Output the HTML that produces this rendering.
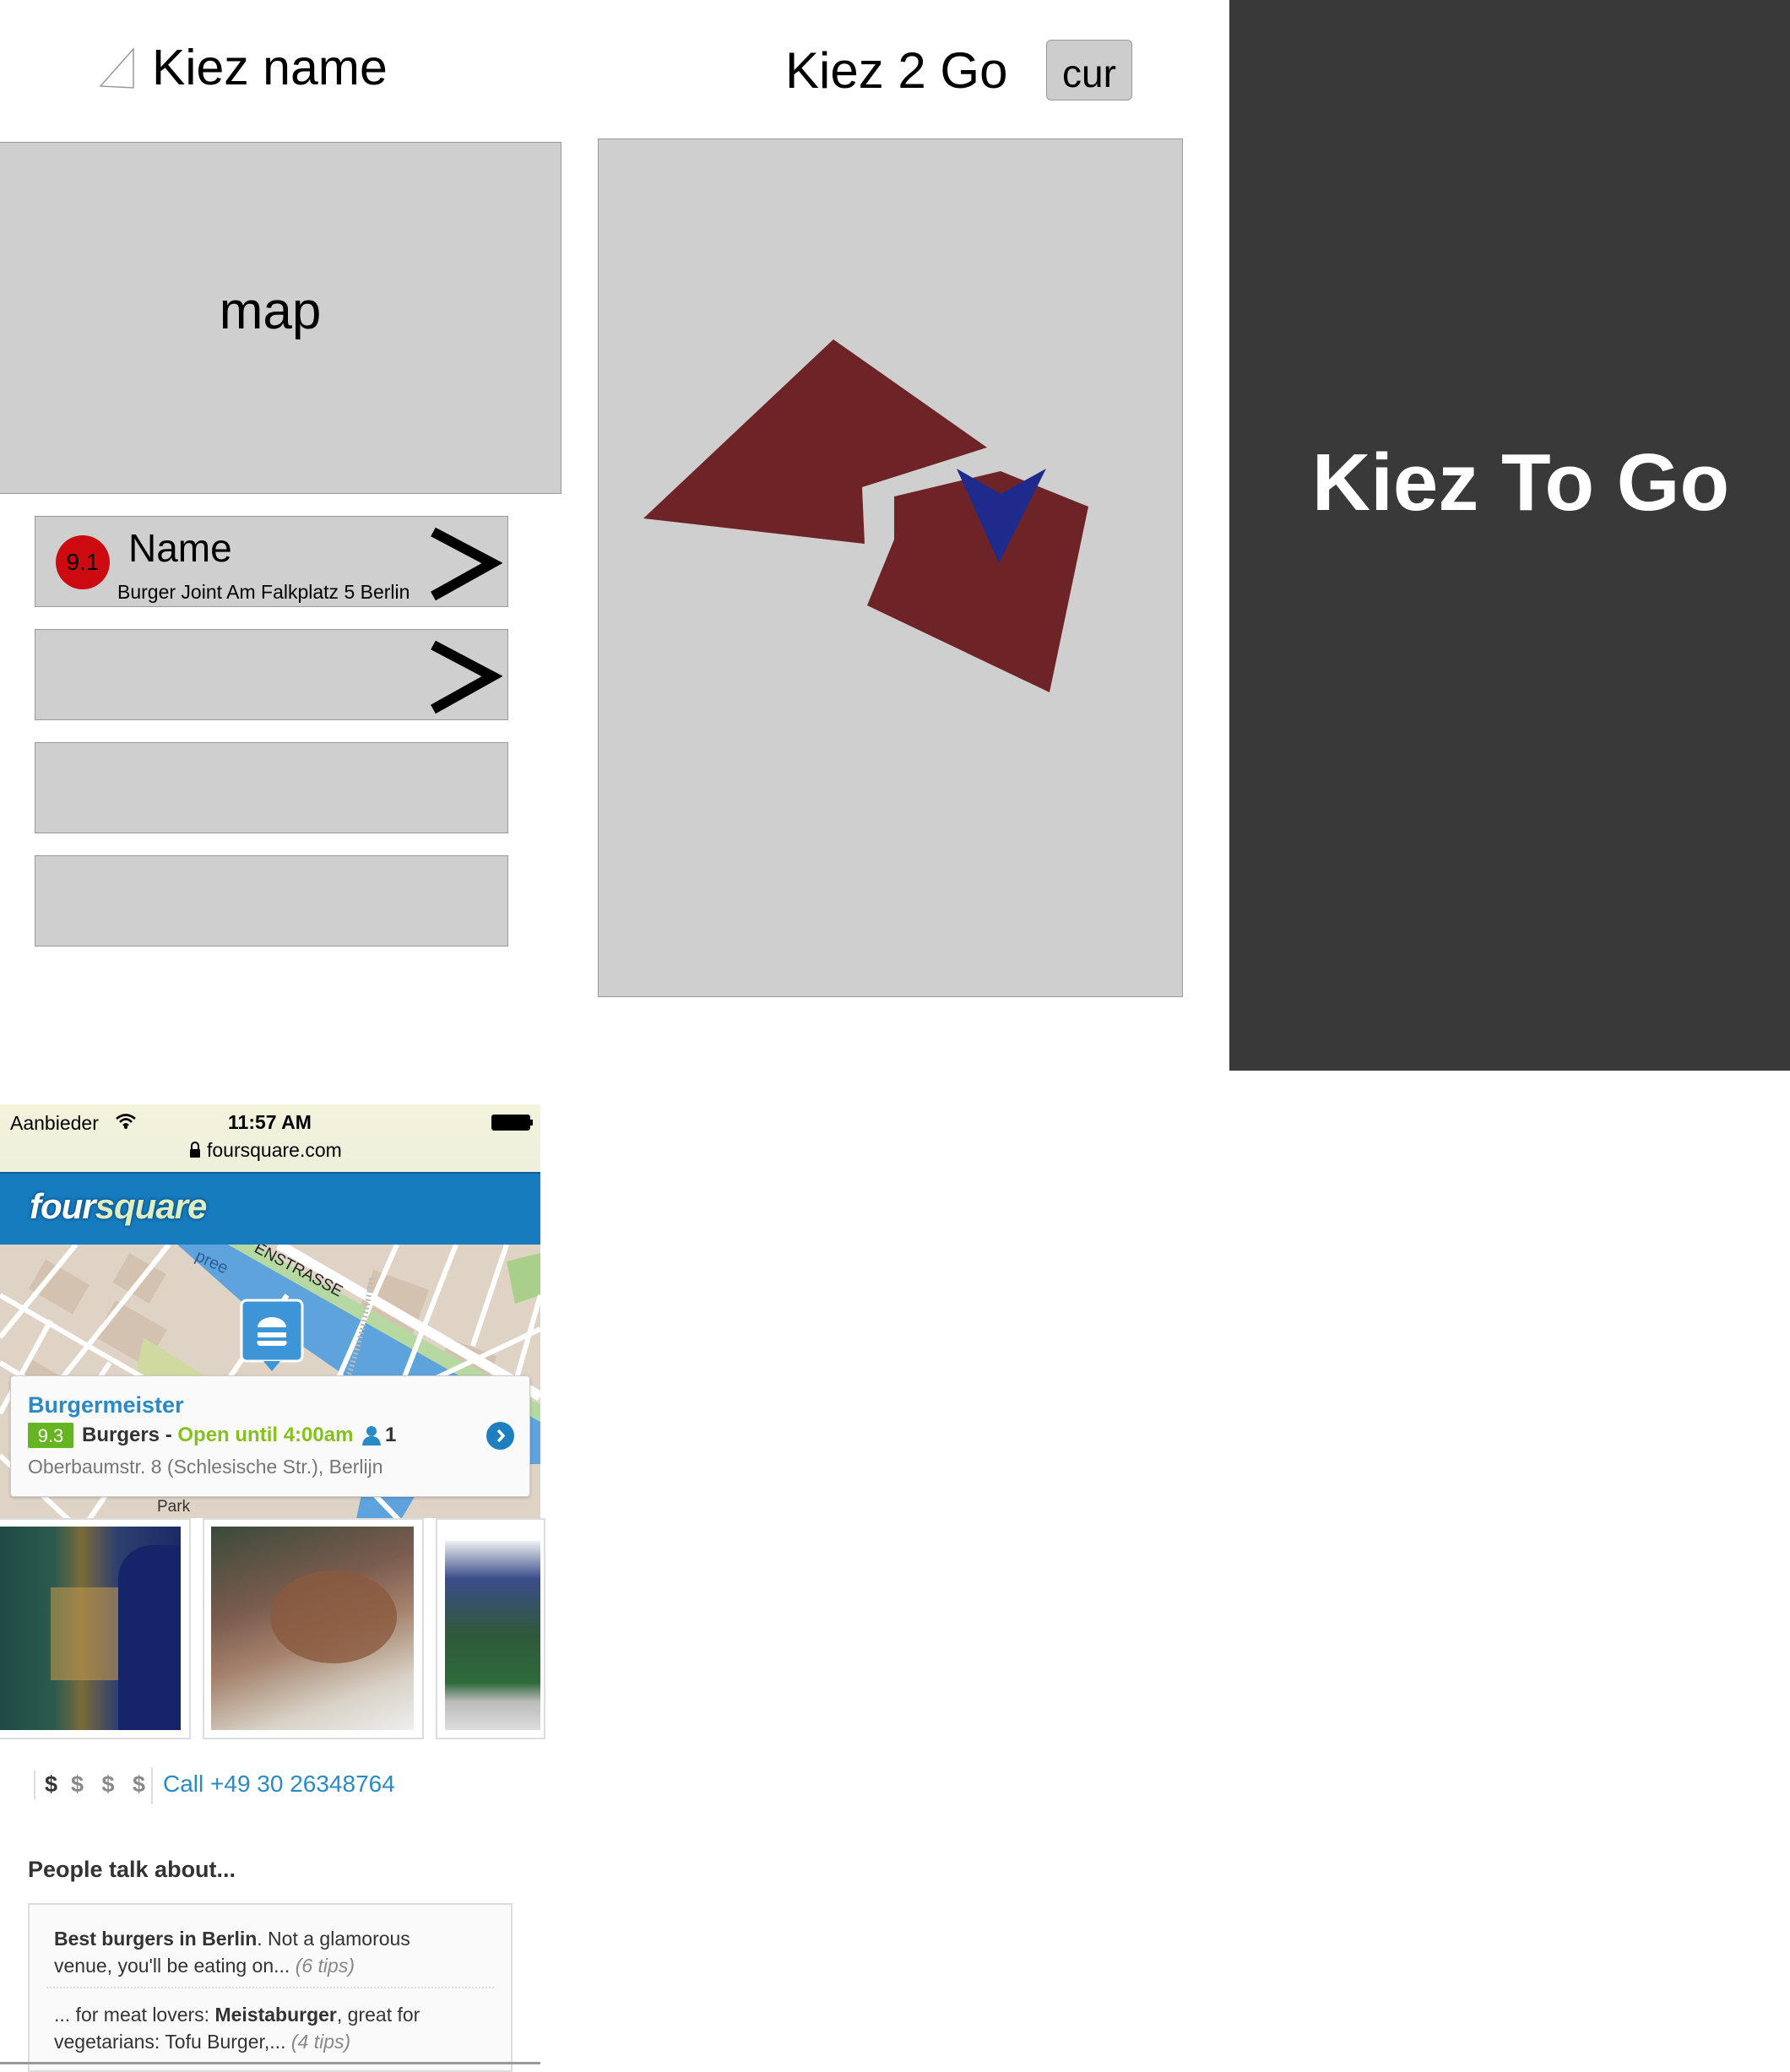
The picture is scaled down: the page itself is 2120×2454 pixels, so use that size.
<!DOCTYPE html>
<html><head><meta charset="utf-8"><style>
*{margin:0;padding:0;box-sizing:border-box}
body{width:2120px;height:2445px;background:#fff;position:relative;overflow:hidden;font-family:"Liberation Sans",sans-serif;color:#000}
.a{position:absolute}
.box{position:absolute;background:#cfcfcf;border:1.5px solid #999}
.t{position:absolute;white-space:nowrap;line-height:1}
</style></head><body>
<!-- dark panel -->
<div class="a" style="left:1456px;top:0;width:664px;height:1268px;background:#393939"></div>
<div class="t" style="left:1456px;width:690px;top:524px;text-align:center;color:#fff;font-weight:bold;font-size:96px">Kiez To Go</div>

<!-- left wireframe -->
<svg class="a" style="left:116px;top:56px" width="46" height="50"><polygon points="42,2 42,48 3,46" fill="none" stroke="#999" stroke-width="1.5"/></svg>
<div class="t" style="left:180px;top:51px;font-size:59px">Kiez name</div>
<div class="box" style="left:-2px;top:168px;width:667px;height:417px"></div>
<div class="t" style="left:0;width:640px;top:338px;text-align:center;font-size:62px">map</div>

<div class="box" style="left:41px;top:611px;width:561px;height:108px"></div>
<div class="a" style="left:66px;top:634px;width:64px;height:64px;border-radius:50%;background:#cc0a10"></div>
<div class="t" style="left:66px;width:64px;top:652px;text-align:center;font-size:28px">9.1</div>
<div class="t" style="left:152px;top:626px;font-size:46px">Name</div>
<div class="t" style="left:139px;top:690px;font-size:23px">Burger Joint Am Falkplatz 5 Berlin</div>
<svg class="a" style="left:505px;top:622px" width="90" height="90"><polyline points="8,8 78,45 8,84" fill="none" stroke="#000" stroke-width="12"/></svg>

<div class="box" style="left:41px;top:745px;width:561px;height:108px"></div>
<svg class="a" style="left:505px;top:756px" width="90" height="90"><polyline points="8,8 78,45 8,84" fill="none" stroke="#000" stroke-width="12"/></svg>
<div class="box" style="left:41px;top:879px;width:561px;height:108px"></div>
<div class="box" style="left:41px;top:1013px;width:561px;height:108px"></div>

<!-- right wireframe -->
<div class="t" style="left:930px;top:54px;font-size:60px">Kiez 2 Go</div>
<div class="a" style="left:1239px;top:47px;width:102px;height:72px;background:#cdcdcd;border:1.5px solid #999;border-radius:6px"></div>
<div class="t" style="left:1239px;width:102px;top:64px;text-align:center;font-size:46px">cur</div>
<div class="box" style="left:708px;top:164px;width:693px;height:1017px"></div>
<svg class="a" style="left:0;top:0" width="1451" height="1266">
<polygon points="762,614 987,402 1169,530 1021,577 1024,644" fill="#6e2427"/>
<polygon points="1059,588 1185,558 1289,600 1243,820 1027,717 1059,639" fill="#6e2427"/>
<polygon points="1133,555 1185,585 1239,555 1183,667" fill="#1e2a8c"/>
</svg>

<!-- phone screenshot -->
<div class="a" style="left:0;top:1308px;width:640px;height:80px;background:linear-gradient(#f4f3dc,#eef0dc)"></div>
<div class="t" style="left:12px;top:1319px;font-size:23px">Aanbieder</div>
<svg class="a" style="left:136px;top:1318px" width="26" height="20"><path d="M2,7 Q13,-2 24,7 M6,11 Q13,4 20,11 M10,15 Q13,12 16,15" fill="none" stroke="#000" stroke-width="2.6"/><circle cx="13" cy="17" r="2" fill="#000"/></svg>
<div class="t" style="left:270px;top:1318px;font-size:23px;font-weight:bold">11:57 AM</div>
<svg class="a" style="left:224px;top:1352px" width="14" height="20"><path d="M3,9 V5 a4,4 0 0 1 8,0 V9" fill="none" stroke="#000" stroke-width="2"/><rect x="1" y="9" width="12" height="10" rx="1" fill="#000"/></svg>
<div class="t" style="left:245px;top:1351px;font-size:23px">foursquare.com</div>
<div class="a" style="left:582px;top:1320px;width:46px;height:19px;border:2px solid #000;border-radius:3px;background:#000"></div>
<div class="a" style="left:628px;top:1326px;width:3px;height:7px;background:#000"></div>

<div class="a" style="left:0;top:1388px;width:640px;height:86px;background:#167cbd;border-top:2px solid #0d5f98"></div>
<div class="t" style="left:35px;top:1408px;font-size:42px;font-weight:bold;font-style:italic;color:#fff;letter-spacing:-1px;text-shadow:0 0 4px #0b4e8a,0 0 3px #0b4e8a">four<span style="color:#dfeec0">square</span></div>

<svg class="a" style="left:0;top:1474px" width="640" height="334">
<rect width="640" height="334" fill="#dfd3c6"/>
<g fill="#d3c2b0">
<rect x="40" y="30" width="60" height="40" transform="rotate(30 70 50)"/><rect x="120" y="80" width="70" height="50" transform="rotate(30 155 105)"/>
<rect x="430" y="40" width="70" height="60" transform="rotate(20 465 70)"/><rect x="520" y="120" width="60" height="60" transform="rotate(20 550 150)"/>
<rect x="20" y="150" width="70" height="50" transform="rotate(30 55 175)"/><rect x="300" y="250" width="70" height="40"/>
<rect x="60" y="220" width="60" height="40" transform="rotate(30 90 240)"/><rect x="140" y="20" width="50" height="40" transform="rotate(30 165 40)"/>
</g>
<polygon points="170,110 250,160 220,240 150,200" fill="#cfd9a0"/>
<polygon points="600,20 640,10 640,60 610,70" fill="#a8d08a"/>
<polygon points="210,0 270,0 640,210 640,260 560,260 300,80" fill="#5ea3dc"/>
<polygon points="440,240 520,250 470,334 420,334" fill="#5ea3dc"/>
<polygon points="270,0 300,0 640,190 640,210" fill="#b5d9a0"/>
<g stroke="#fff" stroke-width="6" fill="none">
<path d="M0,60 L330,250 M0,140 L250,290 M0,250 L90,334 M90,0 L0,110 M200,0 L40,200 M340,60 L200,260 M470,0 L400,160 M540,0 L470,180 M640,60 L600,200 M300,260 L640,100 M380,230 L480,334 M100,334 L150,260 M0,200 L60,90 M30,290 L130,140 M600,0 L560,120"/>
<path d="M330,0 L640,180" stroke-width="12"/>
</g>
<path d="M440,40 Q420,180 360,250 L300,290" stroke="#bbb" stroke-width="6" fill="none" stroke-dasharray="2 3"/>
<text x="230" y="18" font-family="Liberation Sans" font-size="20" fill="#2e5d95" transform="rotate(25 230 18)">pree</text>
<text x="300" y="8" font-family="Liberation Sans" font-size="19" fill="#222" transform="rotate(28 300 8)">ENSTRASSE</text>
<rect x="286" y="66" width="72" height="72" rx="6" fill="#3c95d6" stroke="#fff" stroke-width="3"/>
<polygon points="312,138 332,138 322,150" fill="#3c95d6"/>
<path d="M305,98 a17,12 0 0 1 34,0 z M305,104 h34 v6 h-34z M305,114 h34 a4,4 0 0 1 -4,6 h-26 a4,4 0 0 1 -4,-6z" fill="#fff"/>
<text x="186" y="316" font-family="Liberation Sans" font-size="19" fill="#333">Park</text>
</svg>

<div class="a" style="left:12px;top:1629px;width:616px;height:144px;background:#fafafa;border:1px solid #ccc;border-radius:4px;box-shadow:0 1px 3px rgba(0,0,0,.2)"></div>
<div class="t" style="left:33px;top:1651px;font-size:27px;font-weight:bold;color:#2a8ac6">Burgermeister</div>
<div class="a" style="left:33px;top:1685px;width:54px;height:30px;background:#64b521;border-radius:2px"></div>
<div class="t" style="left:33px;width:54px;top:1690px;text-align:center;font-size:22px;color:#fff">9.3</div>
<div class="t" style="left:97px;top:1688px;font-size:24px;font-weight:bold;color:#333">Burgers <span style="color:#333">-</span> <span style="color:#86c11e">Open until 4:00am</span></div>
<svg class="a" style="left:428px;top:1688px" width="24" height="24"><circle cx="12" cy="7" r="6" fill="#2a8ac6"/><path d="M1,24 Q2,13 12,13 Q22,13 23,24z" fill="#2a8ac6"/></svg>
<div class="t" style="left:456px;top:1688px;font-size:24px;font-weight:bold;color:#333">1</div>
<div class="a" style="left:576px;top:1684px;width:33px;height:33px;border-radius:50%;background:#1e7fc0"></div>
<svg class="a" style="left:576px;top:1684px" width="33" height="33"><polyline points="14,10 20,16.5 14,23" fill="none" stroke="#fff" stroke-width="3.5"/></svg>
<div class="t" style="left:33px;top:1726px;font-size:23px;color:#777">Oberbaumstr. 8 (Schlesische Str.), Berlijn</div>

<!-- photos -->
<div class="a" style="left:0;top:1798px;width:640px;height:262px;background:#fff"></div>
<div class="a" style="left:0;top:1798px;width:226px;height:262px;border:2px solid #ddd;border-left:none;background:#fff"></div>
<div class="a" style="left:0;top:1808px;width:214px;height:241px;background:linear-gradient(90deg,#1f4a44 0%,#2b5b4e 30%,#7a6a3a 45%,#2d3f6f 65%,#1b2a66 100%)"></div>
<div class="a" style="left:60px;top:1880px;width:80px;height:110px;background:#c09650;opacity:.6"></div>
<div class="a" style="left:140px;top:1830px;width:74px;height:219px;background:#16246a;border-radius:40px 0 0 0"></div>
<div class="a" style="left:240px;top:1798px;width:262px;height:262px;border:2px solid #ddd;background:#fff"></div>
<div class="a" style="left:250px;top:1808px;width:240px;height:241px;background:linear-gradient(160deg,#3b4a3a 0%,#7a5c4e 35%,#a4816b 55%,#d8d2c6 80%,#eee 100%)"></div>
<div class="a" style="left:320px;top:1860px;width:150px;height:110px;border-radius:50%;background:#8a5a3e;opacity:.8"></div>
<div class="a" style="left:516px;top:1798px;width:130px;height:262px;border:2px solid #ddd;background:#fff"></div>
<div class="a" style="left:527px;top:1825px;width:113px;height:224px;background:linear-gradient(#eef0f2 0%,#3a4d8a 20%,#2f5a3a 50%,#2e6a3a 75%,#bbb 85%,#ddd 100%)"></div>

<!-- price / call -->
<div class="a" style="left:40px;top:2097px;width:2px;height:34px;background:#ddd"></div>
<div class="t" style="left:53px;top:2100px;font-size:27px;font-weight:bold;color:#333">$</div>
<div class="t" style="left:84px;top:2100px;font-size:27px;font-weight:bold;color:#888;word-spacing:14px">$ $ $</div>
<div class="a" style="left:179px;top:2093px;width:2px;height:44px;background:#ddd"></div>
<div class="t" style="left:193px;top:2099px;font-size:28px;color:#2a8ac6">Call +49 30 26348764</div>

<div class="t" style="left:33px;top:2201px;font-size:27px;font-weight:bold;color:#333">People talk about...</div>
<div class="a" style="left:33px;top:2254px;width:574px;height:200px;background:#fafafa;border:2px solid #ddd"></div>
<div class="t" style="left:64px;top:2280px;font-size:23px;color:#333;line-height:32px"><b>Best burgers in Berlin</b>. Not a glamorous<br>venue, you'll be eating on... <i style="color:#888">(6 tips)</i></div>
<div class="a" style="left:55px;top:2353px;width:530px;border-top:2px dotted #ddd"></div>
<div class="t" style="left:64px;top:2370px;font-size:23px;color:#333;line-height:32px">... for meat lovers: <b>Meistaburger</b>, great for<br>vegetarians: Tofu Burger,... <i style="color:#888">(4 tips)</i></div>
<div class="a" style="left:0;top:2442px;width:640px;height:3px;background:#999"></div>
</body></html>
